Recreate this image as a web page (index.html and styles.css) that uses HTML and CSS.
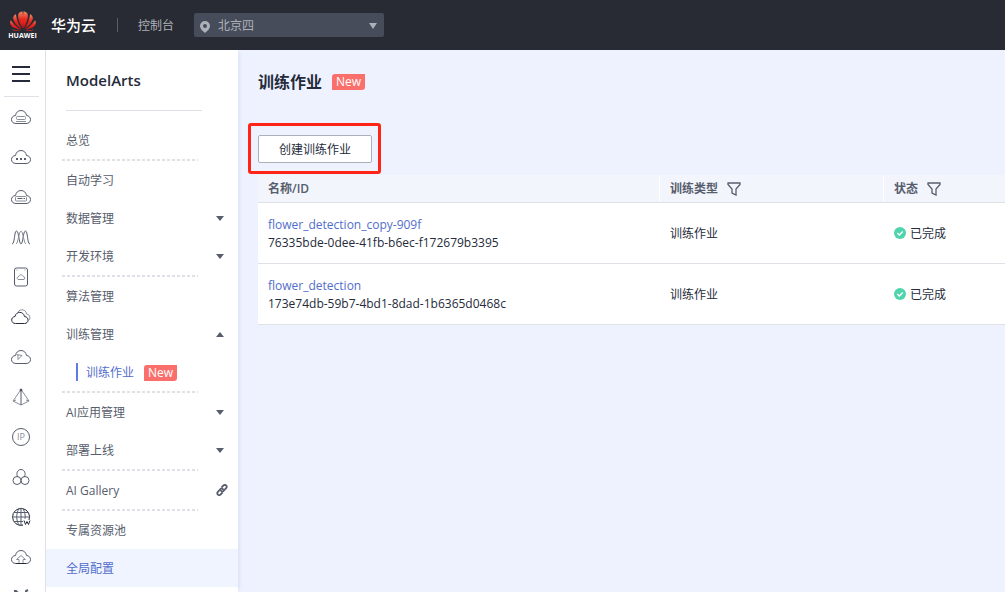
FILE: index.html
```html
<!DOCTYPE html>
<html lang="zh-CN">
<head>
<meta charset="utf-8">
<title>ModelArts</title>
<link rel="stylesheet" href="styles.css">
</head>
<body>
<svg class="defs" aria-hidden="true">
  <symbol id="cloud" viewBox="0 0 22 20"><path d="M6 16.500C3.200 16.500 1.500 14.900 1.500 12.500 1.500 10.300 3 8.800 5.500 8.500 6 5.500 8 3.500 11 3.500s5 2 5.500 5c2.500.3 4 1.800 4 4 0 2.400-1.700 4-4.500 4z"/></symbol>
  <symbol id="funnel" viewBox="0 0 14 14"><path d="M1 1h12v1.500L9 7v6L5 11V7L1 2.500z"/></symbol>
  <symbol id="done" viewBox="0 0 12 12"><circle cx="6" cy="6" r="6" fill="#50d4ab"/><path d="M3.300 6l2 2 3.500-3.500" fill="none" stroke="#fff" stroke-width="1.400"/></symbol>
</svg>
<header class="topbar">
  <a class="brand" href="#">
    <svg class="logo" viewBox="0 0 26 21" aria-hidden="true">
      <defs><linearGradient id="petal" x1="0" y1="0" x2="0" y2="1"><stop offset="0" stop-color="#f28768"/><stop offset=".45" stop-color="#e52a20"/><stop offset="1" stop-color="#d81212"/></linearGradient></defs>
      <g fill="url(#petal)">
        <path d="M12.500 17.500C8.500 10 7 4.500 9 2c1-1 2.200-1.500 3.500-1.500C13.300 5 13.200 12 12.500 17.500z"/>
        <path d="M13.500 17.500c4-7.500 5.500-13 3.500-15.500-1-1-2.200-1.500-3.500-1.500C12.700 5 12.800 12 13.500 17.500z"/>
        <path d="M11.500 18C6 14 2.800 9.500 3.200 6.500 3.500 5 4.500 3.800 5.900 3.300 6.500 8.500 8.500 13.500 11.500 18z"/>
        <path d="M14.500 18c5.500-4 8.700-8.500 8.300-11.500-.3-1.500-1.300-2.700-2.700-3.200C19.500 8.500 17.500 13.500 14.500 18z"/>
        <path d="M11 18.800C5.500 17.800 1.500 15.800.5 13.500c-.6-1.500-.3-3 .3-4.300C3.500 13 7 16.300 11 18.800z"/>
        <path d="M15 18.800c5.500-1 9.500-3 10.500-5.300.6-1.500.3-3-.3-4.300C22.500 13 19 16.300 15 18.800z"/>
        <path d="M10.800 19.300c-3 .9-6.600 1-8.300-.9 2.500.9 5.500 1.100 8.300.9zM15.200 19.300c3 .9 6.600 1 8.300-.9-2.500.9-5.500 1.100-8.300.9z"/>
      </g>
    </svg>
    <span class="logo-text">HUAWEI</span>
  </a>
  <span class="cloud-name">华为云</span>
  <span class="bar-divider"></span>
  <a class="console" href="#">控制台</a>
  <div class="region">
    <svg class="pin" viewBox="0 0 10 12" aria-hidden="true"><path fill-rule="evenodd" d="M5 0a5 5 0 0 1 5 5c0 3-3 5-5 7-2-2-5-4-5-7a5 5 0 0 1 5-5zm0 3a2 2 0 1 0 0 4 2 2 0 0 0 0-4z"/></svg>
    <select class="region-select" aria-label="区域"><option>北京四</option></select>
    <svg class="region-arrow" viewBox="0 0 8 6" aria-hidden="true"><path d="M0 0h8L4 6z"/></svg>
  </div>
</header>
<div class="layout">
  <nav class="rail" aria-label="服务列表">
    <button class="menu" aria-label="菜单"><span></span><span></span><span></span></button>
    <a href="#" aria-label="弹性云服务器"><svg viewBox="0 0 22 20"><use href="#cloud"/><rect class="thin" x="6.500" y="9.500" width="9" height="3" rx="1"/><path class="thin" d="M6 14.500h10"/></svg></a>
    <a href="#" aria-label="云耀云服务器"><svg viewBox="0 0 22 20"><use href="#cloud"/><path class="heavy" d="M6 12h2m2 0h2m2 0h2"/></svg></a>
    <a href="#" aria-label="裸金属服务器"><svg viewBox="0 0 22 20"><use href="#cloud"/><rect class="thin" x="5.500" y="9.500" width="11" height="4.500" rx="1"/><path d="M7.500 11.500h5m1 0h1.500"/></svg></a>
    <a href="#" aria-label="弹性伸缩"><svg viewBox="0 0 22 20"><path d="M2 17C5 17 4 4 6.500 4S9 17 11 17 13 4 15.500 4 17 17 20 17"/><path class="thin" d="M6 17C8 17 9 4 11 4s3 13 5 13"/></svg></a>
    <a href="#" aria-label="云手机"><svg viewBox="0 0 22 20"><rect x="4.500" y="1" width="13" height="18" rx="2"/><path class="thin" d="M8 12.500c-1.500-1-.5-3 .8-3 1-2.300 3.500-2.300 4.400 0 2 .3 2 2.500.8 3zM6.500 3h1M14.500 3h1"/></svg></a>
    <a href="#" aria-label="专属云"><svg viewBox="0 0 22 20"><path class="dark" d="M5.500 16.500c-5 0-5-6.500-.5-7 1-5.500 8.500-5.500 9.500 0 5 .5 4.500 7 0 7z"/><path class="thin" d="M8 5c2-3.500 8-2.800 8.500 2 4 .5 4.500 5.500 1.500 7"/></svg></a>
    <a href="#" aria-label="函数服务"><svg viewBox="0 0 22 20"><use href="#cloud"/><path class="thin" d="M6.500 7.500l5.500 1-4 4V8"/></svg></a>
    <a href="#" aria-label="存储服务"><svg viewBox="0 0 22 20"><path class="thin" d="M11 2.500L3 14l8 4 8-4zM3 14l3-1m13 1l-3-1"/><path d="M11 3v15"/><circle class="dot" cx="11" cy="3" r="1"/></svg></a>
    <a href="#" aria-label="弹性公网IP"><svg viewBox="0 0 22 20"><circle cx="11" cy="10" r="8.500"/><text x="11" y="13">IP</text></svg></a>
    <a href="#" aria-label="云容器"><svg viewBox="0 0 22 20"><path d="M8 10C5.500 7 7.500 2.500 11 2.500S16.500 7 14 10"/><circle cx="7" cy="13.500" r="4"/><circle cx="15" cy="13.500" r="4"/></svg></a>
    <a href="#" aria-label="域名注册"><svg class="globe" viewBox="0 0 22 20"><path d="M19 13a8.500 8.500 0 1 0-6 5.200"/><path class="thin" d="M13 18c-1 .7-3 .7-4-.2-3-4-3-12 0-16 1-.6 3-.6 4 0 2 3 2.500 7 2 10M11 1.500v17M2.500 10h17M4 5.500h14M4 14.500h9"/><path class="heavy" d="M14 13.500l1.500 4 1.500-3 1.500 3 1.500-4"/></svg></a>
    <a href="#" aria-label="云备份"><svg viewBox="0 0 22 20"><use href="#cloud"/><path class="thin" d="M9 16v-3.500H6.500L11 8.500l4.500 4H13V16"/><path class="dark" d="M6 16.500h10"/></svg></a>
    <a href="#" aria-label="更多服务"><svg viewBox="0 0 22 20"><path class="heavy" d="M4 4h2l2 2v4M18 3l-2 1v6"/></svg></a>
  </nav>
  <nav class="sidebar" aria-label="ModelArts">
    <h2 class="product">ModelArts</h2>
    <ul class="group"><li><a href="#">总览</a></li></ul>
    <ul class="group">
      <li><a href="#">自动学习</a></li>
      <li><a href="#">数据管理<i class="caret"></i></a></li>
      <li><a href="#">开发环境<i class="caret"></i></a></li>
    </ul>
    <ul class="group">
      <li><a href="#">算法管理</a></li>
      <li><a href="#">训练管理<i class="caret up"></i></a></li>
      <li><a class="child" href="#">训练作业<span class="badge">New</span></a></li>
    </ul>
    <ul class="group">
      <li><a href="#">AI应用管理<i class="caret"></i></a></li>
      <li><a href="#">部署上线<i class="caret"></i></a></li>
    </ul>
    <ul class="group">
      <li><a href="#">AI Gallery<svg class="link-icon" viewBox="0 0 12 12" aria-hidden="true"><path d="M5.500 3.500l1.800-1.800c2-2 4.500.5 2.800 2.500L7.500 7C6.500 8 5 7.500 4.800 6.200M6.500 8.500l-1.800 1.800c-2 2-4.500-.5-2.800-2.500L4.500 5C5.500 4 7 4.500 7.200 5.800"/></svg></a></li>
    </ul>
    <ul class="group">
      <li><a href="#">专属资源池</a></li>
      <li><a class="current" href="#">全局配置</a></li>
    </ul>
  </nav>
  <main class="content">
    <div class="heading"><h1>训练作业</h1><span class="badge">New</span></div>
    <div class="create-wrap"><button class="create">创建训练作业</button></div>
    <table class="jobs">
      <colgroup><col class="col-name"><col class="col-type"><col></colgroup>
      <thead>
        <tr>
          <th>名称/ID</th>
          <th><div class="cell">训练类型<button class="filter" aria-label="筛选训练类型"><svg viewBox="0 0 14 14"><use href="#funnel"/></svg></button></div></th>
          <th><div class="cell">状态<button class="filter" aria-label="筛选状态"><svg viewBox="0 0 14 14"><use href="#funnel"/></svg></button></div></th>
        </tr>
      </thead>
      <tbody>
        <tr>
          <td><a href="#">flower_detection_copy-909f</a><div>76335bde-0dee-41fb-b6ec-f172679b3395</div></td>
          <td>训练作业</td>
          <td><div class="status"><svg viewBox="0 0 12 12" aria-hidden="true"><use href="#done"/></svg>已完成</div></td>
        </tr>
        <tr>
          <td><a href="#">flower_detection</a><div>173e74db-59b7-4bd1-8dad-1b6365d0468c</div></td>
          <td>训练作业</td>
          <td><div class="status"><svg viewBox="0 0 12 12" aria-hidden="true"><use href="#done"/></svg>已完成</div></td>
        </tr>
      </tbody>
    </table>
  </main>
</div>
</body>
</html>
```
FILE: styles.css
```css
* { box-sizing: border-box; }
body {
  margin: 0;
  height: 100vh;
  display: flex;
  flex-direction: column;
  overflow: hidden;
  background: #eef2ff;
  color: #252b3a;
  font: 12px/18px "Open Sans", "Noto Sans CJK SC", sans-serif;
}
a { color: inherit; text-decoration: none; }
button, select { font: inherit; color: inherit; }
svg { display: block; flex: none; }
.defs { position: absolute; width: 0; height: 0; }

.topbar {
  flex: none;
  height: 50px;
  display: flex;
  align-items: center;
  padding-left: 9px;
  background: #282b33;
  color: #adb0b8;
}
.brand { width: 27px; display: flex; flex-direction: column; align-items: center; }
.logo { width: 26px; height: 21px; }
.logo-text { color: #fff; font-size: 7px; line-height: 8px; font-weight: 700; }
.cloud-name { margin-left: 15px; color: #fff; font-size: 15px; font-weight: 500; }
.bar-divider { width: 1px; height: 14px; margin: 0 20px 0 21px; background: #575d6c; }
.console { padding-top: 2px; }
.region {
  position: relative;
  width: 190px;
  height: 24px;
  margin-left: 20px;
  border-radius: 2px;
  background: #464c59;
}
.region-select {
  width: 100%;
  height: 24px;
  padding: 2px 24px 0;
  border: 0;
  background: transparent;
  appearance: none;
}
.pin { position: absolute; left: 6px; top: 8px; width: 10px; height: 12px; fill: #adb0b8; }
.region-arrow { position: absolute; right: 7px; top: 10px; width: 8px; height: 6px; fill: #adb0b8; }

.layout { flex: 1; min-height: 0; display: flex; overflow: hidden; }
.rail {
  flex: none;
  width: 46px;
  padding: 0 6px 0 4px;
  overflow: hidden;
  border-right: 1px solid #dfe1e6;
  background: #fff;
}
.menu {
  width: 100%;
  height: 47px;
  display: flex;
  flex-direction: column;
  align-items: center;
  justify-content: center;
  gap: 5px;
  padding: 2px 2px 0 0;
  border: 0;
  border-bottom: 1px solid #dfe1e6;
  background: none;
}
.menu span { width: 18px; height: 2px; background: #252b3a; }
.rail a { height: 40px; display: flex; align-items: center; justify-content: center; padding-right: 2px; }
.rail svg { width: 22px; height: 20px; fill: none; stroke: #575d6c; stroke-width: 1; }
.rail .thin { stroke: #8a8e99; }
.rail .heavy { stroke-width: 2; }
.rail .dark { stroke: #252b3a; stroke-width: 1; }
.rail .globe { stroke: #252b3a; }
.rail .globe .thin { stroke: #575d6c; }
.rail .globe .heavy { stroke-width: 1; }
.rail .dot { fill: #252b3a; }
.rail text { fill: #8a8e99; stroke: none; font-size: 9px; text-anchor: middle; }

.sidebar { flex: none; width: 192px; overflow: hidden; background: #fff; box-shadow: 3px 0 4px -2px #d5ddf0; }
.product {
  height: 61px;
  margin: 0 36px 10px 20px;
  border-bottom: 1px solid #dfe1e6;
  font-size: 15px;
  font-weight: 600;
  line-height: 61px;
}
.group { margin: 0; padding: 0; list-style: none; color: #575d6c; }
.group + .group::before {
  content: "";
  display: block;
  height: 2px;
  margin: 0 40px 0 16px;
  background: repeating-linear-gradient(90deg, #dfe1e6 0 3px, transparent 3px 5px);
}
.group a { height: 38px; display: flex; align-items: center; padding: 2px 14px 0 20px; }
.caret { margin: 0 0 2px auto; border: solid transparent; border-width: 5px 4px 0; border-top-color: #575d6c; }
.caret.up { border-width: 0 4px 5px; border-bottom-color: #575d6c; }
.link-icon { width: 12px; height: 12px; margin: 0 -4px 2px auto; fill: none; stroke: #575d6c; stroke-width: 1.8; }
.group .child { padding-left: 30px; color: #526ecc; }
.child::before { content: ""; width: 2px; height: 18px; margin: 0 8px 2px 0; background: #5e7ce0; }
.group .current { background: #f0f4ff; color: #526ecc; }
.badge {
  height: 16px;
  margin-left: 10px;
  padding: 0 4px;
  border-radius: 3px 0 3px 0;
  background: #fa6f6b;
  color: #fff;
  line-height: 16px;
  font-weight: 500;
}

.content { flex: 1; min-width: 0; padding: 20px 0 0 20px; }
.heading { height: 24px; display: flex; align-items: center; }
.heading h1 { margin: 0; font-size: 16px; line-height: 24px; font-weight: 700; }
.create-wrap { position: relative; width: fit-content; margin: 41px 0 12px; }
.create-wrap::after {
  content: "";
  position: absolute;
  inset: -12px -9px -11px -10px;
  border: 3px solid #ff2416;
  border-radius: 3px;
  pointer-events: none;
}
.create {
  display: block;
  height: 28px;
  padding: 2px 20px 0;
  border: 1px solid #adb0b8;
  border-radius: 2px;
  background: #fff;
}
.jobs { width: 100%; table-layout: fixed; border-collapse: separate; border-spacing: 0; }
.col-name { width: 401px; }
.col-type { width: 224px; }
.jobs th, .jobs td { padding: 0 11px; border-bottom: 1px solid #dfe1e6; text-align: left; }
.jobs th:first-child, .jobs td:first-child { padding-left: 10px; }
.jobs th { height: 28px; background: #f2f5fc; color: #575d6c; font-weight: 600; }
.jobs th + th { box-shadow: inset 1px 0 #fff; }
.jobs td { height: 61px; padding-top: 2px; background: #fff; }
.jobs td a { color: #526ecc; }
.cell { display: flex; align-items: center; gap: 9px; }
.filter { padding: 0; border: 0; background: none; }
.filter svg { width: 14px; height: 14px; fill: none; stroke: #575d6c; stroke-width: 1.3; }
.status { display: flex; align-items: center; gap: 4px; }
.status svg { width: 12px; height: 12px; margin-bottom: 2px; }
```
